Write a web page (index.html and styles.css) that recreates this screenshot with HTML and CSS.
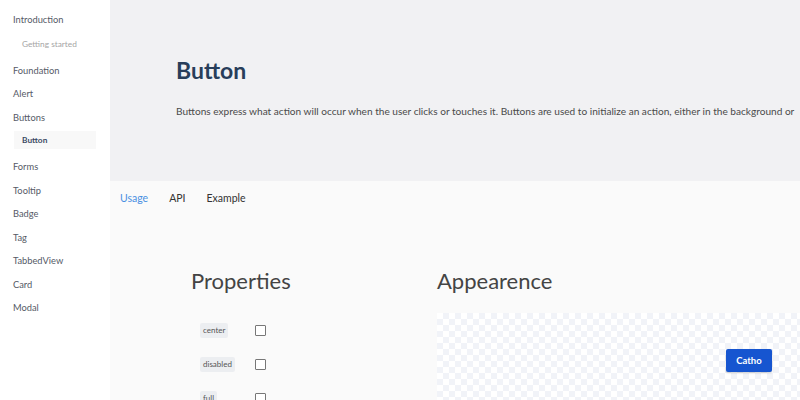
FILE: index.html
```html
<!DOCTYPE html>
<html>
<head>
<meta charset="utf-8">
<link rel="stylesheet" href="styles.css">
</head>
<body>
<div class="app">
  <nav class="sidebar">
    <div class="nav-item">Introduction</div>
    <div class="nav-sub">Getting started</div>
    <div class="nav-item">Foundation</div>
    <div class="nav-item">Alert</div>
    <div class="nav-item">Buttons</div>
    <div class="nav-sub active">Button</div>
    <div class="nav-item">Forms</div>
    <div class="nav-item">Tooltip</div>
    <div class="nav-item">Badge</div>
    <div class="nav-item">Tag</div>
    <div class="nav-item">TabbedView</div>
    <div class="nav-item">Card</div>
    <div class="nav-item">Modal</div>
  </nav>
  <main class="main">
    <header class="hero">
      <h1 class="title">Button</h1>
      <p class="desc">Buttons express what action will occur when the user clicks or touches it. Buttons are used to initialize an action, either in the background or</p>
    </header>
    <section class="body">
      <div class="tabs">
        <span class="tab active">Usage</span>
        <span class="tab">API</span>
        <span class="tab">Example</span>
      </div>
      <div class="columns">
        <div class="props">
          <h2 class="section-title">Properties</h2>
          <div class="prop first"><span class="tag">center</span><span class="check"></span></div>
          <div class="prop"><span class="tag">disabled</span><span class="check"></span></div>
          <div class="prop"><span class="tag">full</span><span class="check"></span></div>
        </div>
        <div class="appearance">
          <h2 class="section-title">Appearence</h2>
          <div class="canvas">
            <button class="btn">Catho</button>
          </div>
        </div>
      </div>
    </section>
  </main>
</div>
</body>
</html>
```
FILE: styles.css
```css
* { box-sizing: border-box; }
html, body { margin: 0; padding: 0; height: 100%; overflow: hidden; }
body { font-family: "Lato", "Noto Sans", sans-serif; color: #333; background: #fafafa; }
.app { display: flex; height: 400px; }
.sidebar {
  width: 110px; flex: none; background: #fff;
  padding: 13px 0 0 0;
}
.nav-item {
  font-size: 9.3px; color: #555a66; line-height: 14px;
  padding: 0 0 0 13px; margin-bottom: 9.5px;
}
.nav-sub {
  font-size: 8.3px; color: #a5a5a5; line-height: 14px;
  padding: 0 0 0 22px; margin: 0 0 13px 0;
}
.nav-sub.active {
  color: #3b4a63; font-weight: bold; background: #f8f8f8;
  margin: -3px 14px 11px 14px; padding: 2px 0 2px 8px; line-height: 14px;
}
.main { flex: 1; display: flex; flex-direction: column; min-width: 0; }
.hero {
  height: 181px; background: #f1f1f3; padding: 55px 0 0 66px; flex: none;
}
.title {
  margin: 0; font-size: 23px; font-weight: 700; color: #283e5a; line-height: 30px;
}
.desc {
  margin: 19px 0 0 0; font-size: 10.1px; color: #4a4a4a; white-space: nowrap; line-height: 14px;
}
.body { flex: 1; background: #fafafa; }
.tabs { display: flex; gap: 21px; padding: 11px 0 0 10px; font-size: 10.5px; }
.tab { color: #333; }
.tab.active { color: #4a90e2; }
.columns { display: flex; padding: 63px 0 0 81px; }
.props { width: 246px; flex: none; }
.section-title {
  margin: 0; font-size: 22px; font-weight: 400; color: #444; line-height: 28px;
}
.prop {
  display: flex; align-items: center; height: 15px; width: 66px;
  margin-left: 9px; margin-bottom: 19px;
}
.prop.first { margin-top: 28px; }
.tag {
  font-size: 8px; color: #555; background: #eceef1; border-radius: 2px;
  padding: 0 3px; line-height: 15px; height: 15px;
}
.check {
  width: 11px; height: 11px; border: 1px solid #777; border-radius: 1px; background: #fff;
  margin-left: auto;
}
.appearance { flex: 1; min-width: 0; }
.canvas {
  margin-top: 18px; height: 200px;
  background-color: #fff;
  background-image:
    linear-gradient(45deg, #f1f3f8 25%, transparent 25%, transparent 75%, #f1f3f8 75%),
    linear-gradient(45deg, #f1f3f8 25%, transparent 25%, transparent 75%, #f1f3f8 75%);
  background-size: 12px 12px;
  background-position: 0 0, 6px 6px;
  padding: 35px 0 0 289px;
}
.btn {
  font-family: "Lato", sans-serif; font-weight: 700; font-size: 9.5px; color: #fff;
  background: #1655d0; border: none; border-radius: 2px; width: 46px; height: 23px;
  box-shadow: 0 1px 2px rgba(0,0,0,0.2); padding: 0;
}
```
